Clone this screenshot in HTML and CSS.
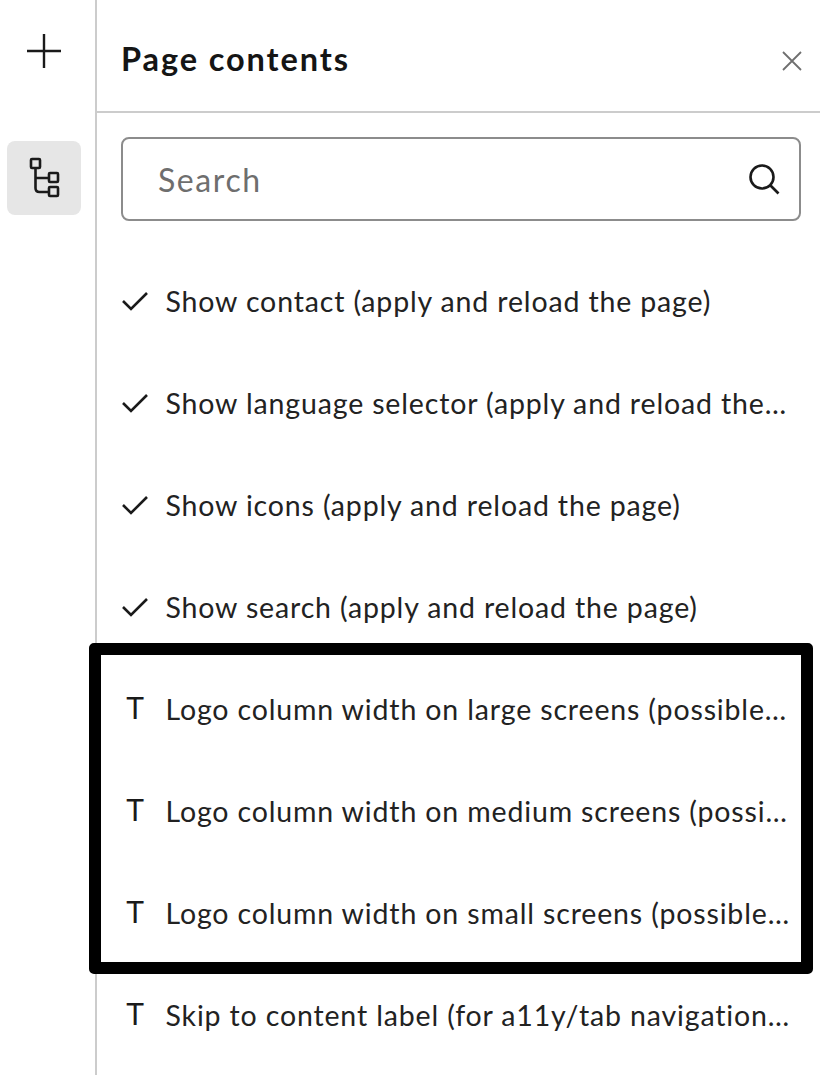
FILE: index.html
```html
<!DOCTYPE html>
<html lang="en">
<head>
<meta charset="utf-8">
<title>Page contents</title>
<link rel="stylesheet" href="styles.css">
</head>
<body>
<div class="app">
  <nav class="rail">
    <button class="rail-btn">
      <svg width="36" height="36" viewBox="0 0 36 36"><path d="M18 1v34M1 18h34" class="ink" stroke-width="2.4"/></svg>
    </button>
    <button class="rail-btn active">
      <svg width="32" height="42" viewBox="0 0 32 42"><g class="ink" stroke-width="2.6"><rect x="3" y="2" width="9" height="9" rx="1"/><rect x="21" y="16" width="9" height="9" rx="1"/><rect x="21" y="30" width="9" height="9" rx="1"/><path d="M7.500 11v20q0 4 4 4H21M7.500 21H21"/></g></svg>
    </button>
  </nav>
  <main class="panel">
    <header class="head">
      <h1 class="title">Page contents</h1>
      <svg class="close" width="22" height="22" viewBox="0 0 22 22"><path d="M2 2l18 18M20 2L2 20" stroke="#6f6f6f" stroke-width="1.800" fill="none"/></svg>
    </header>
    <div class="search">
      <span class="placeholder">Search</span>
      <svg width="34" height="34" viewBox="0 0 34 34"><circle cx="15" cy="15" r="11.500" class="ink" stroke-width="2.600"/><path d="M23.500 23.500l8 8" class="ink" stroke-width="2.600"/></svg>
    </div>
    <ul class="list">
      <li class="row"><svg class="check" width="28" height="22" viewBox="0 0 28 22"><path d="M2 11l8 8L26 3" class="ink" stroke-width="2.600"/></svg><span class="label">Show contact (apply and reload the page)</span></li>
      <li class="row"><svg class="check" width="28" height="22" viewBox="0 0 28 22"><path d="M2 11l8 8L26 3" class="ink" stroke-width="2.600"/></svg><span class="label">Show language selector (apply and reload the page)</span></li>
      <li class="row"><svg class="check" width="28" height="22" viewBox="0 0 28 22"><path d="M2 11l8 8L26 3" class="ink" stroke-width="2.600"/></svg><span class="label">Show icons (apply and reload the page)</span></li>
      <li class="row"><svg class="check" width="28" height="22" viewBox="0 0 28 22"><path d="M2 11l8 8L26 3" class="ink" stroke-width="2.600"/></svg><span class="label">Show search (apply and reload the page)</span></li>
      <li class="group">
        <ul class="list">
          <li class="row"><span class="t">T</span><span class="label">Logo column width on large screens (possible values)</span></li>
          <li class="row"><span class="t">T</span><span class="label">Logo column width on medium screens (possible values)</span></li>
          <li class="row"><span class="t">T</span><span class="label">Logo column width on small screens (possible values)</span></li>
        </ul>
        <div class="highlight"></div>
      </li>
      <li class="row"><span class="t">T</span><span class="label">Skip to content label (for a11y/tab navigation only)</span></li>
    </ul>
  </main>
</div>
</body>
</html>
```
FILE: styles.css
```css
* { box-sizing: border-box; }
html, body { margin: 0; height: 100%; background: #fff; overflow: hidden; }
body { font-family: "Lato", "Liberation Sans", sans-serif; color: #1a1a1a; }
.app { display: flex; height: 1075px; }
.rail { width: 97px; flex: none; border-right: 2px solid #cccccc; display: flex; flex-direction: column; align-items: center; padding: 6px 7px 0 0; gap: 45px; }
.rail-btn { width: 74px; height: 74px; border: 0; border-radius: 8px; background: none; display: flex; align-items: center; justify-content: center; padding: 0; flex: none; }
.rail-btn:first-child { height: 90px; }
.rail-btn.active { background: #e6e6e6; }
.ink { fill: none; stroke: #1a1a1a; }
.panel { flex: 1; min-width: 0; display: flex; flex-direction: column; }
.head { height: 113px; border-bottom: 2px solid #cccccc; display: flex; align-items: center; justify-content: space-between; padding: 6px 17px 0 24px; flex: none; }
.title { margin: 0; font-size: 32.500px; font-weight: 700; letter-spacing: 1.900px; color: #151515; }
.close { margin-top: 4px; }
.search { margin: 24px 19px 0 24px; height: 84px; border: 2px solid #8c8c8c; border-radius: 8px; display: flex; align-items: center; justify-content: space-between; padding: 0 18px 0 35px; flex: none; }
.placeholder { font-size: 32px; color: #6e6e6e; letter-spacing: 1.600px; }
.list { list-style: none; margin: 0; padding: 0; }
.panel > .list { margin-top: 29px; }
.row { height: 102px; display: flex; align-items: center; padding: 0 28px 0 24px; }
.check { flex: none; width: 28px; margin-right: 17px; }
.t { flex: none; width: 28px; margin-right: 17px; font-size: 30px; font-weight: 400; text-align: center; position: relative; top: -2px; }
.label { flex: 1; min-width: 0; margin-left: -0.500px; white-space: nowrap; overflow: hidden; text-overflow: ellipsis; font-size: 28.500px; font-weight: 400; letter-spacing: 0.850px; color: #222; }
.group { position: relative; }
.highlight { position: absolute; left: -8px; right: 7px; top: -15px; bottom: -10px; border: 12px solid #000; border-radius: 5px; pointer-events: none; }
```
